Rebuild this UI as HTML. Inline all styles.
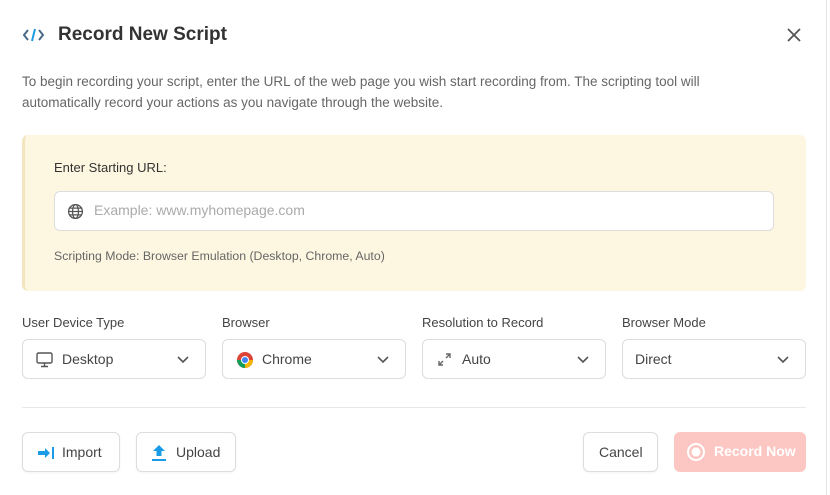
<!DOCTYPE html>
<html><head><style>
*{box-sizing:border-box;margin:0;padding:0}
body{width:830px;height:495px;background:#fff;font-family:"Liberation Sans",sans-serif;color:#333;position:relative;overflow:hidden}
.abs{position:absolute}
.title{left:58px;top:24px;font-size:19px;font-weight:bold;color:#333}
.desc{left:22px;top:71px;width:755px;font-size:13.5px;line-height:21px;color:#666}
.yel{left:22px;top:135px;width:784px;height:156px;background:#fdf6e0;border-radius:6px;border-left:3px solid #f3e6bf}
.lbl{font-size:13px;color:#444}
.inp{left:54px;top:191px;width:720px;height:40px;background:#fff;border:1px solid #ddd;border-radius:6px}
.sel{top:339px;width:184px;height:40px;border:1px solid #ddd;border-radius:6px;background:#fff;font-size:14px;color:#444}
.sel span{position:absolute;top:11px}
.chev{position:absolute;right:16px;top:14px}
.btn{top:432px;height:40px;border:1px solid #ddd;border-radius:6px;background:#fff;font-size:14px;color:#444;box-shadow:0 1px 2px rgba(0,0,0,.05)}
.btn span{position:absolute;top:11px}
</style></head><body>
<svg class="abs" style="left:22px;top:27px" width="24" height="16" viewBox="0 0 24 16"><path d="M6 3L2 8l4 5" fill="none" stroke="#4a6a8a" stroke-width="2"/><path d="M13 2l-3 12" stroke="#1a9be6" stroke-width="2"/><path d="M17 3l4 5-4 5" fill="none" stroke="#4a6a8a" stroke-width="2"/></svg>
<div class="abs title">Record New Script</div>
<svg class="abs" style="left:786px;top:27px" width="16" height="16"><path d="M2 2l12 12M14 2L2 14" stroke="#555" stroke-width="1.8"/></svg>
<div class="abs desc">To begin recording your script, enter the URL of the web page you wish start recording from. The scripting tool will automatically record your actions as you navigate through the website.</div>
<div class="abs yel"></div>
<div class="abs lbl" style="left:54px;top:160px;color:#333">Enter Starting URL:</div>
<div class="abs inp"></div>
<svg class="abs" style="left:67px;top:203px" width="17" height="17" viewBox="0 0 16 16" fill="none" stroke="#555" stroke-width="1.2"><circle cx="8" cy="8" r="6.5"/><ellipse cx="8" cy="8" rx="2.8" ry="6.5"/><path d="M1.5 8h13M2.5 4.8h11M2.5 11.2h11"/></svg>
<div class="abs" style="left:94px;top:202px;font-size:14px;color:#aaa">Example: www.myhomepage.com</div>
<div class="abs" style="left:54px;top:249px;font-size:12.3px;color:#666">Scripting Mode: Browser Emulation (Desktop, Chrome, Auto)</div>
<div class="abs lbl" style="left:22px;top:315px">User Device Type</div>
<div class="abs lbl" style="left:222px;top:315px">Browser</div>
<div class="abs lbl" style="left:422px;top:315px">Resolution to Record</div>
<div class="abs lbl" style="left:622px;top:315px">Browser Mode</div>
<div class="abs sel" style="left:22px"><svg class="abs" style="left:13px;top:12px" width="17" height="16" viewBox="0 0 17 16" fill="none" stroke="#555" stroke-width="1.4"><rect x="1" y="1" width="15" height="10" rx="1.5"/><path d="M8.5 11v3M5 14.5h7"/></svg><span style="left:39px">Desktop</span><svg class="chev" width="12" height="10"><path d="M1 3l5 5 5-5" fill="none" stroke="#555" stroke-width="1.6"/></svg></div>
<div class="abs sel" style="left:222px"><svg class="abs" style="left:13px;top:11px" width="18" height="18" viewBox="0 0 18 18"><circle cx="9" cy="9" r="8" fill="#db4437"/><path d="M9 9L2.1 13A8 8 0 0 0 9 17z" fill="#0f9d58"/><path d="M9 9L1 9A8 8 0 0 0 2.1 13z" fill="#0f9d58"/><path d="M9 9h8a8 8 0 0 1-8 8z" fill="#f4b400"/><circle cx="9" cy="9" r="4" fill="#fff"/><circle cx="9" cy="9" r="3" fill="#4285f4"/></svg><span style="left:39px">Chrome</span><svg class="chev" width="12" height="10"><path d="M1 3l5 5 5-5" fill="none" stroke="#555" stroke-width="1.6"/></svg></div>
<div class="abs sel" style="left:422px"><svg class="abs" style="left:14px;top:12px" width="15" height="15" viewBox="0 0 15 15" fill="none" stroke="#666" stroke-width="1.4"><path d="M9 2h4v4M13 2L9 6M6 13H2V9M2 13l4-4"/></svg><span style="left:39px">Auto</span><svg class="chev" width="12" height="10"><path d="M1 3l5 5 5-5" fill="none" stroke="#555" stroke-width="1.6"/></svg></div>
<div class="abs sel" style="left:622px"><span style="left:12px">Direct</span><svg class="chev" width="12" height="10"><path d="M1 3l5 5 5-5" fill="none" stroke="#555" stroke-width="1.6"/></svg></div>
<div class="abs" style="left:22px;top:407px;width:784px;height:1px;background:#e8e8e8"></div>
<div class="abs btn" style="left:22px;width:98px"><svg class="abs" style="left:14px;top:13px" width="18" height="14" viewBox="0 0 18 14"><path d="M1 5h7V2l5 5-5 5V9H1z" fill="#1a9be6"/><rect x="15" y="1" width="2" height="12" fill="#1a9be6"/></svg><span style="left:39px">Import</span></div>
<div class="abs btn" style="left:136px;width:100px"><svg class="abs" style="left:14px;top:11px" width="16" height="18" viewBox="0 0 16 18"><path d="M8 1l6 6h-3.5v5h-5V7H2z" fill="#1a9be6"/><rect x="1" y="15" width="14" height="2" fill="#1a9be6"/></svg><span style="left:39px">Upload</span></div>
<div class="abs btn" style="left:583px;width:75px"><span style="left:15px">Cancel</span></div>
<div class="abs" style="left:674px;top:432px;width:132px;height:40px;border-radius:6px;background:#fcc6c2;color:#fff;font-weight:bold;font-size:14px"><svg class="abs" style="left:12px;top:10px" width="20" height="20"><circle cx="10" cy="10" r="8" fill="none" stroke="#fff" stroke-width="2"/><circle cx="10" cy="10" r="4.5" fill="#fff"/></svg><span class="abs" style="left:40px;top:11px">Record Now</span></div>
<div class="abs" style="left:826px;top:0;width:1px;height:495px;background:#e5e5e5"></div>
</body></html>
